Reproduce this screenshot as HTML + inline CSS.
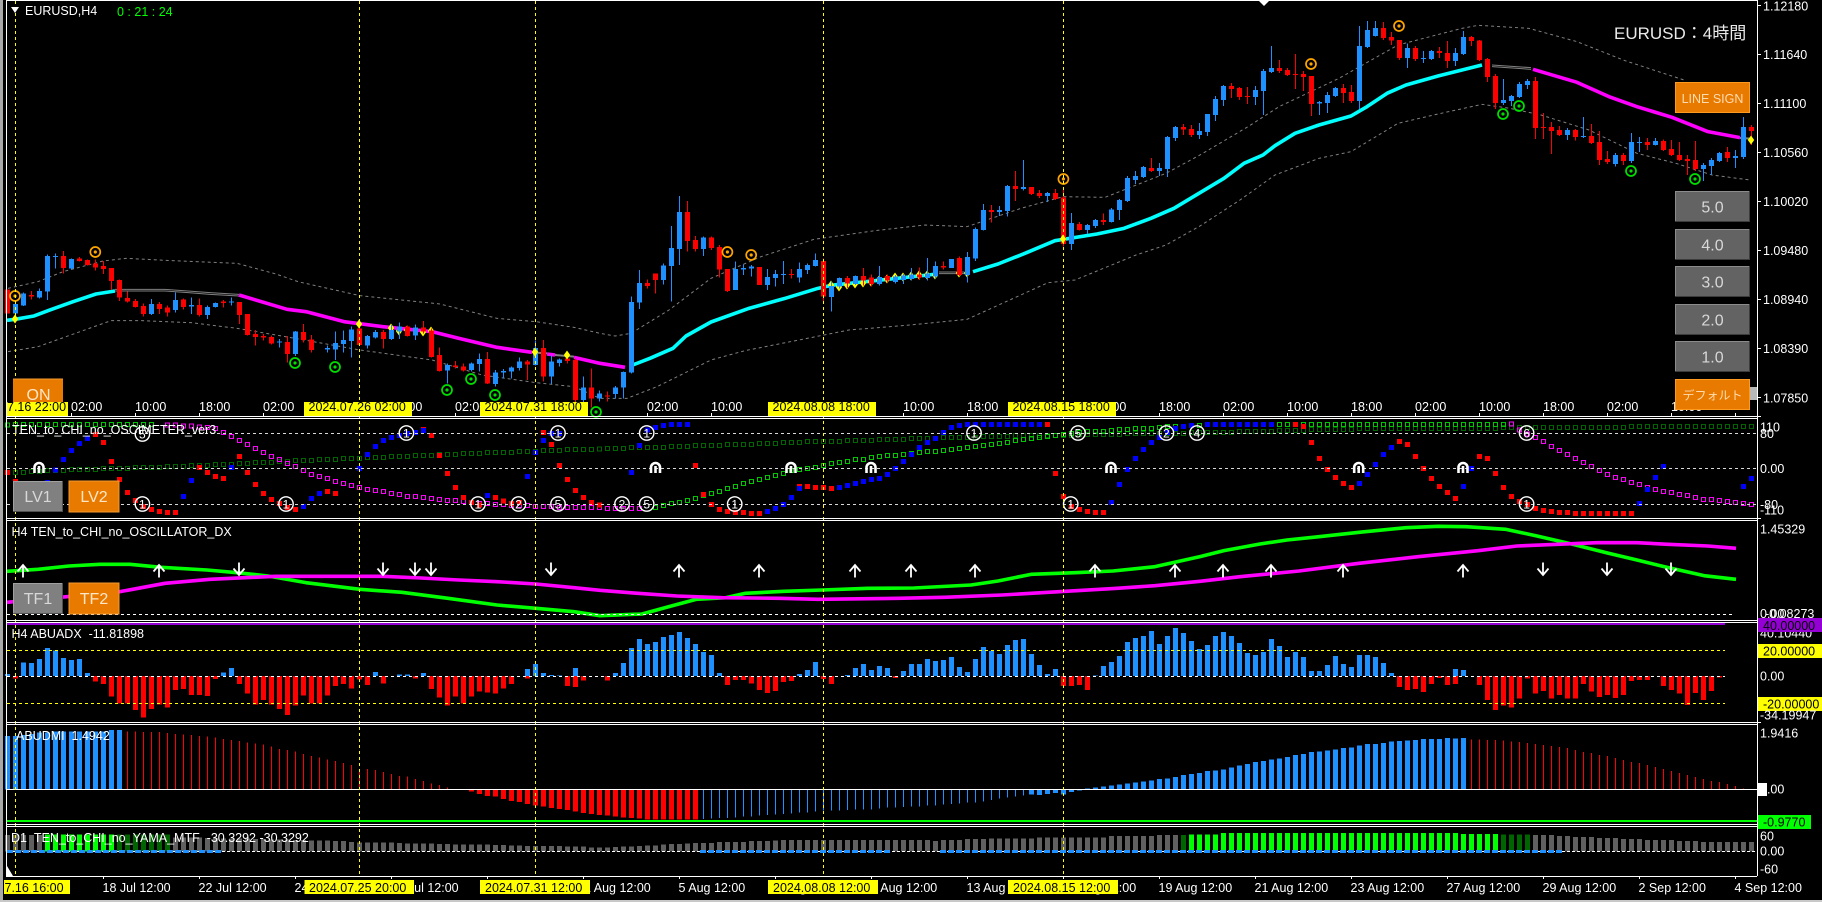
<!DOCTYPE html>
<html><head><meta charset="utf-8"><title>EURUSD,H4</title>
<style>
html,body{margin:0;padding:0;background:#000;width:1822px;height:902px;overflow:hidden}
svg{display:block}
text{font:12.5px "Liberation Sans","Noto Sans CJK JP",sans-serif;fill:#fff}
.k{fill:#000}
.b{font-size:16px;text-anchor:middle;fill:#d8d8d8}
.o{font-size:16px;text-anchor:middle;fill:#ffe6c8}
.s path,.s polyline{fill:none;vector-effect:non-scaling-stroke}
.c{shape-rendering:crispEdges}
.n{font-size:12px;text-anchor:middle}
</style></head><body>
<svg width="1822" height="902" viewBox="0 0 1822 902" xmlns="http://www.w3.org/2000/svg">
<defs>
<marker id="fr" markerUnits="userSpaceOnUse" markerWidth="5" markerHeight="15" refX="2.5" refY="7.5" overflow="visible"><rect width="5" height="15" fill="#f00" shape-rendering="crispEdges"/></marker>
<marker id="fb" markerUnits="userSpaceOnUse" markerWidth="5" markerHeight="15" refX="2.5" refY="7.5" overflow="visible"><rect width="5" height="15" fill="#00f" shape-rendering="crispEdges"/></marker>
<marker id="hm" markerUnits="userSpaceOnUse" markerWidth="5" markerHeight="15" refX="2.5" refY="7.5" overflow="visible"><path d="M0 0h5v15H0zM1 3v9h3V3z" fill-rule="evenodd" fill="#f0f" shape-rendering="crispEdges"/></marker>
<marker id="hg" markerUnits="userSpaceOnUse" markerWidth="5" markerHeight="15" refX="2.5" refY="7.5" overflow="visible"><path d="M0 0h5v15H0zM1 3v9h3V3z" fill-rule="evenodd" fill="#00c800" shape-rendering="crispEdges"/></marker>
<marker id="hd" markerUnits="userSpaceOnUse" markerWidth="5" markerHeight="15" refX="2.5" refY="7.5" overflow="visible"><path d="M0 0h5v15H0zM1 3v9h3V3z" fill-rule="evenodd" fill="#006400" shape-rendering="crispEdges"/></marker>
<g id="ro"><circle r="5" fill="none" stroke="#ffa500" stroke-width="1.7"/><circle r="1.6" fill="#ffa500"/></g>
<g id="rg"><circle r="5" fill="none" stroke="#00e000" stroke-width="1.7"/><circle r="1.6" fill="#00e000"/></g>
<path id="dm" d="M0-4.5L3.2 0 0 4.5-3.2 0z" fill="#ff0"/>
<path id="up" d="M0 6.5V-6M-5.5 .5L0-6 5.5 .5" fill="none" stroke="#fff" stroke-width="1.8"/>
<path id="dn" d="M0-6.5V6M-5.5-.5L0 6 5.5-.5" fill="none" stroke="#fff" stroke-width="1.8"/>
<path id="ar" d="M-4.5 5V-.5a4.5 4.5 0 0 1 9 0V5M0-2V5" fill="none" stroke="#fff" stroke-width="2.6"/>
<circle id="cr" r="7.2" fill="none" stroke="#fff" stroke-width="1.4"/>
</defs>
<rect width="1822" height="902" fill="#000"/>

<!-- main chart -->
<g class="s" transform="scale(1 .33333)">
<polyline stroke="#808080" stroke-dasharray="3 3" points="8,865 38,845 63,815 103,783 126,775 172,782 237,790 276,822 298,845 360,887 440,912 497,955 536,965 574,982 600,1000 615,1008 631,1000 669,930 711,835 761,770 814,718 875,692 925,675 967,680 1021,625 1063,590 1105,592 1166,520 1200,465 1248,380 1279,320 1339,235 1398,135 1462,85 1478,76 1529,85 1577,125 1625,182 1684,240"/>
<polyline stroke="#808080" stroke-dasharray="3 3" points="8,1055 38,1040 80,995 111,962 142,962 191,968 237,985 276,1005 360,1050 432,1080 482,1125 536,1148 574,1160 600,1195 627,1195 657,1160 711,1080 745,1052 799,1020 849,990 910,975 967,958 1048,848 1075,840 1136,765 1166,735 1200,678 1240,600 1275,525 1319,475 1351,455 1398,370 1438,342 1482,313 1510,325 1541,345 1589,390 1637,460 1676,490 1712,525 1750,540"/>
<polyline stroke="#0ff" stroke-width="3.6" stroke-linejoin="round" points="7,961 15,958 34,948 50,930 73,905 96,882 115,873"/>
<polyline stroke="#808080" points="115,868 165,868 188,873 210,878 239,883"/><polyline stroke="#808080" points="115,873 165,873 188,878 210,883 239,888"/>
<polyline stroke="#f0f" stroke-width="3.6" stroke-linejoin="round" points="239,885 287,928 306,935 344,965 383,980 432,995 459,1015 497,1042 532,1057"/>
<polyline stroke="#808080" stroke-width="2" points="532,1057 547,1060"/>
<polyline stroke="#f0f" stroke-width="3.6" points="547,1062 555,1065"/><polyline stroke="#808080" stroke-width="2" points="555,1065 574,1070"/>
<polyline stroke="#f0f" stroke-width="3.6" stroke-linejoin="round" points="574,1072 600,1090 625,1102"/>
<polyline stroke="#0ff" stroke-width="3.6" stroke-linejoin="round" points="631,1097 650,1075 673,1045 686,1008 711,966 749,925 784,896 818,865 831,856 937,822"/>
<polyline stroke="#808080" points="939,816 964,816"/><polyline stroke="#808080" points="939,821 964,821"/>
<polyline stroke="#0ff" stroke-width="3.6" stroke-linejoin="round" points="973,815 998,792 1025,760 1055,722 1097,702 1124,685 1151,655 1174,625 1200,578 1224,535 1244,490 1263,465 1275,437 1295,400 1319,375 1351,348 1367,320 1387,280 1406,255 1438,228 1482,195"/>
<polyline stroke="#808080" points="1492,195 1531,203"/><polyline stroke="#808080" points="1492,200 1531,208"/>
<polyline stroke="#f0f" stroke-width="3.6" stroke-linejoin="round" points="1533,208 1577,247 1609,290 1637,320 1672,352 1708,395 1740,413"/>
<polyline stroke="#808080" stroke-width="2" points="1740,414 1751,416"/>
</g>
<use href="#dm" x="391" y="328"/><use href="#dm" x="399" y="331"/><use href="#dm" x="407" y="330"/><use href="#dm" x="423" y="332"/><use href="#dm" x="431" y="331"/>
<use href="#dm" x="831" y="285"/><use href="#dm" x="839" y="287"/><use href="#dm" x="847" y="285"/><use href="#dm" x="855" y="284"/><use href="#dm" x="863" y="283"/><use href="#dm" x="871" y="282"/><use href="#dm" x="879" y="280"/><use href="#dm" x="887" y="279"/><use href="#dm" x="895" y="277"/><use href="#dm" x="903" y="277"/><use href="#dm" x="911" y="276"/><use href="#dm" x="919" y="275"/><use href="#dm" x="927" y="275"/><use href="#dm" x="935" y="275"/><use href="#dm" x="959" y="273"/><use href="#dm" x="967" y="273"/>
<g class="s c" transform="translate(.5 0) scale(1 .33333)">
<path stroke="#1e90ff" d="M15 905V960M23 877V918M39 865V895M47 763V900M55 760V806M71 775V808M151 897V945M175 877V937M191 893V942M207 917V957M215 907V923M231 892V917M279 1017V1042M295 993V1068M327 1036V1058M335 995V1080M343 992V1058M351 980V1073M367 1005V1046M375 990V1015M391 975V1020M399 968V1017M415 973V1020M447 1090V1150M471 1088V1115M479 1060V1115M495 1110V1160M503 1107V1135M511 1100V1135M519 1072V1112M535 1022V1097M551 1067V1152M559 1075V1100M583 1130V1210M599 1172V1205M615 1158V1195M623 1115V1195M631 890V1120M639 810V927M663 790V853M671 678V905M679 588V795M703 710V768M735 785V870M743 793V825M751 795V830M767 807V870M775 810V860M783 783V852M799 788V848M807 790V822M815 760V800M831 845V935M839 833V865M855 826V855M879 798V856M895 825V850M903 822V852M911 804V842M927 774V842M935 785V835M951 777V804M967 756V848M975 682V783M983 612V692M999 618V648M1007 555V650M1023 480V572M1047 576V606M1071 639V750M1087 672V702M1095 657V684M1111 624V668M1119 597V660M1127 528V606M1135 513V552M1143 498V534M1159 489V528M1167 408V531M1175 378V423M1199 369V417M1207 342V408M1215 288V363M1223 255V318M1255 258V315M1263 207V345M1271 138V219M1319 303V345M1327 276V339M1335 261V291M1359 78V327M1367 63V144M1375 63V110M1407 130V204M1423 153V189M1431 150V180M1455 144V198M1463 93V165M1503 237V315M1511 285V318M1519 246V294M1527 237V267M1567 384V420M1583 351V414M1615 459V500M1631 399V489M1639 411V456M1655 414V437M1703 489V543M1711 474V525M1719 456V486M1735 450V504M1743 351V477"/>
<path stroke="#1e90ff" stroke-width="5" d="M15 912V940M23 880V916M39 873V892M47 768V875M55 768V771M71 777V805M151 912V942M175 900V930M191 915V919M207 921V945M215 909V921M231 905V908M279 1025V1028M295 995V1062M327 1044V1049M335 1029V1048M343 1020V1032M351 988V1023M367 1008V1036M375 996V1012M391 990V1017M399 980V995M415 982V1007M447 1095V1112M471 1090V1110M479 1077V1092M495 1117V1152M503 1113V1118M511 1102V1115M519 1085V1104M535 1044V1095M551 1085V1130M559 1079V1089M583 1163V1200M599 1180V1195M615 1162V1182M623 1116V1163M631 906V1118M639 849V908M663 796V840M671 744V798M679 636V747M703 712V747M735 807V870M743 804V809M751 800V805M767 831V855M775 822V834M783 822V825M799 807V832M807 795V810M815 780V798M831 858V891M839 834V860M855 828V852M879 831V852M895 830V846M903 827V840M911 823V837M927 820V834M935 798V830M951 777V804M967 771V825M975 687V776M983 630V690M999 630V636M1007 558V633M1023 561V567M1047 579V588M1071 669V732M1087 675V690M1095 660V678M1111 628V666M1119 600V630M1127 534V603M1135 528V540M1143 501V531M1159 504V513M1167 411V507M1175 381V414M1199 393V405M1207 342V396M1215 297V345M1223 258V300M1255 270V291M1263 213V273M1271 204V216M1319 306V310M1327 285V309M1335 264V288M1359 138V303M1367 90V141M1375 84V108M1407 144V174M1423 174V177M1431 153V177M1455 159V183M1463 111V162M1503 300V309M1511 288V303M1519 252V291M1527 243V255M1567 390V405M1583 408V411M1615 465V492M1631 426V483M1639 426V429M1655 423V435M1703 495V507M1711 480V498M1719 459V483M1735 468V474M1743 381V471"/>
<path stroke="#f00" d="M7 868V940M31 873V898M63 753V820M79 771V785M87 778V797M95 778V812M103 783V822M111 804V870M119 838V903M127 875V908M135 897V923M143 910V950M159 906V942M167 917V950M183 895V928M199 895V950M223 900V923M239 906V972M247 942V1007M255 990V1037M263 1002V1022M271 1006V1033M287 1008V1088M303 972V1028M311 1005V1058M359 965V1037M383 990V1045M407 977V1010M423 963V1000M431 985V1072M439 1042V1115M455 1083V1105M463 1090V1115M487 1056V1152M527 1080V1140M543 1020V1145M567 1070V1090M575 1075V1208M591 1105V1222M607 1175V1205M647 838V866M655 820V880M687 603V755M695 708V755M711 710V750M719 735V833M727 807V876M759 801V855M791 807V835M823 775V910M847 828V864M863 804V857M871 824V860M887 824V848M919 802V840M943 785V808M959 770V828M991 615V668M1015 513V603M1031 561V585M1039 570V594M1055 567V600M1063 568V740M1079 666V692M1103 640V675M1151 474V516M1183 372V405M1191 375V411M1231 249V294M1239 261V300M1247 261V312M1279 180V219M1287 204V228M1295 162V267M1303 213V273M1311 228V348M1343 252V309M1351 255V309M1383 66V120M1391 96V135M1399 120V180M1415 138V183M1439 141V174M1447 123V204M1471 108V138M1479 120V183M1487 174V246M1495 222V327M1535 231V417M1543 339V417M1551 366V462M1559 378V408M1575 387V422M1591 372V432M1599 393V495M1607 453V492M1623 459V495M1647 414V450M1663 418V453M1671 420V468M1679 426V483M1687 465V525M1695 423V513M1727 441V486M1751 375V435"/>
<path stroke="#f00" stroke-width="5" d="M7 868V940M31 885V889M63 768V804M79 775V783M87 780V795M95 791V802M103 798V807M111 804V843M119 840V892M127 894V905M135 903V921M143 918V942M159 912V927M167 923V938M183 899V921M199 915V945M223 905V909M239 906V945M247 942V1005M255 1002V1011M263 1008V1013M271 1011V1030M287 1026V1062M303 996V1020M311 1018V1050M359 985V1035M383 996V1017M407 980V1008M423 982V995M431 992V1071M439 1065V1113M455 1096V1101M463 1100V1112M487 1077V1150M527 1085V1093M543 1044V1130M567 1076V1083M575 1080V1200M591 1163V1195M607 1187V1190M647 849V858M655 820V840M687 636V723M695 720V747M711 712V744M719 741V809M727 807V873M759 801V855M791 822V825M823 783V890M847 834V850M863 828V841M871 832V852M887 828V841M919 823V833M943 798V803M959 774V825M991 630V636M1015 558V567M1031 561V582M1039 579V588M1055 579V597M1063 593V732M1079 672V690M1103 660V666M1151 504V513M1183 381V389M1191 387V405M1231 258V267M1239 264V291M1247 288V291M1279 204V213M1287 210V225M1295 222V225M1303 222V231M1311 228V312M1343 264V279M1351 276V303M1383 84V114M1391 111V122M1399 120V174M1415 144V177M1439 153V159M1447 159V183M1471 111V123M1479 122V180M1487 177V231M1495 228V309M1535 243V384M1543 381V384M1551 381V393M1559 390V405M1575 390V411M1591 408V429M1599 426V480M1607 477V486M1623 465V483M1647 426V435M1663 423V450M1671 447V465M1679 465V480M1687 477V483M1695 480V507M1727 456V474M1751 381V393"/>
</g>
<use href="#ro" x="15" y="296"/><use href="#ro" x="95.3" y="252"/><use href="#ro" x="727.4" y="252"/><use href="#ro" x="751.2" y="255"/><use href="#ro" x="1063.4" y="179"/><use href="#ro" x="1311" y="64"/><use href="#ro" x="1399" y="26"/>
<use href="#rg" x="295" y="363"/><use href="#rg" x="335" y="367"/><use href="#rg" x="447" y="390"/><use href="#rg" x="471" y="379"/><use href="#rg" x="495" y="395"/><use href="#rg" x="596" y="412"/><use href="#rg" x="1503" y="114"/><use href="#rg" x="1519" y="106"/><use href="#rg" x="1631" y="171"/><use href="#rg" x="1695" y="179"/>
<use href="#dm" x="15" y="319"/><use href="#dm" x="359" y="324"/><use href="#dm" x="535" y="352"/><use href="#dm" x="567" y="355"/><use href="#dm" x="1751" y="140"/><use href="#dm" x="1063" y="239"/>

<!-- main time axis -->
<g fill="#fff" class="c"><path stroke="#fff" d="M71.5 413v3M135.5 413v3M199.5 413v3M263.5 413v3M327.5 413v3M391.5 413v3M455.5 413v3M519.5 413v3M647.5 413v3M711.5 413v3M903.5 413v3M967.5 413v3M1159.5 413v3M1223.5 413v3M1287.5 413v3M1351.5 413v3M1415.5 413v3M1479.5 413v3M1543.5 413v3M1607.5 413v3M1671.5 413v3M1735.5 413v3"/></g>
<text x="71" y="411">02:00</text><text x="135" y="411">10:00</text><text x="199" y="411">18:00</text><text x="263" y="411">02:00</text><text x="391" y="411">18:00</text><text x="455" y="411">02:00</text><text x="647" y="411">02:00</text><text x="711" y="411">10:00</text><text x="903" y="411">10:00</text><text x="967" y="411">18:00</text><text x="1095" y="411">10:00</text><text x="1159" y="411">18:00</text><text x="1223" y="411">02:00</text><text x="1287" y="411">10:00</text><text x="1351" y="411">18:00</text><text x="1415" y="411">02:00</text><text x="1479" y="411">10:00</text><text x="1543" y="411">18:00</text><text x="1607" y="411">02:00</text><text x="1671" y="411">10:00</text>

<!-- sub 1 -->
<g class="s" transform="translate(.5 410) scale(1 .33333)">
<polyline marker-start="url(#hd)" marker-mid="url(#hd)" marker-end="url(#hd)" points="7,188 15,187 23,187 31,184 39,184 47,181 55,181 63,181 71,178 79,178 87,178 95,178 103,175 111,175 119,175 127,175 135,172 143,172 151,172 159,172 167,169 175,169 183,169 191,166 199,166 207,166 215,163 223,163 231,163 239,160 247,160 255,157 263,157 271,157 279,154 287,154 295,151 303,151 311,151 319,148 327,148 335,148 343,145 351,145 359,145 367,142 375,142 383,142 391,139 399,139 407,139 415,136 423,136 431,136 439,133 447,133 455,133 463,130 471,130 479,130 487,127 495,127 503,127 511,127 519,124 527,124 535,124 543,121 551,121 559,121 567,118 575,118 583,118 591,118 599,117 607,115 615,115 623,115 631,112 639,112 647,112 655,112 663,112 671,109 679,109 687,109 695,106 703,106 711,106 719,106 727,103 735,103 743,103 751,103 759,100 767,100 775,100 783,97 791,97 799,97 807,94 815,94 823,94 831,94 839,94 847,91 855,91 863,91 871,91 879,88 887,88 895,88 903,88 911,85 919,85 927,85 935,85 943,82 951,82 959,82 967,82 975,82 983,79 991,79 999,79 1007,79 1015,76 1023,76 1031,76 1039,76 1047,76 1055,76 1063,76 1071,76 1079,73 1087,73 1095,73 1103,73 1111,73 1119,73 1127,70 1135,70 1143,70 1151,70 1159,70 1167,70 1175,70 1183,70 1191,67 1199,67 1207,67 1215,67 1223,67 1231,67 1239,64 1247,64 1255,64 1263,64 1271,64 1279,61 1287,61 1295,61 1303,61 1311,58 1319,58 1327,58 1335,58 1343,58 1351,58 1359,55 1367,55 1375,55 1383,55 1391,55 1399,55 1407,55 1415,55 1423,55 1431,55 1439,55 1447,55 1455,55 1463,55 1471,55 1479,55 1487,55 1495,55 1503,52 1511,52 1519,52 1527,52 1535,52 1543,52 1551,52 1559,52 1567,52 1575,52 1583,52 1591,52 1599,52 1607,52 1615,52 1623,52 1631,49 1639,49 1647,49 1655,49 1663,49 1671,49 1679,49 1687,49 1695,49 1703,49 1711,49 1719,49 1727,49 1735,49 1743,49 1751,49"/>
<polyline marker-start="url(#hg)" marker-mid="url(#hg)" marker-end="url(#hg)" points="7,45 15,44 23,44 31,44 39,44 47,44 55,44 63,44 71,44 79,44 87,44 95,44 103,44 111,44 119,44 127,44 135,44 143,44 151,44 655,292 663,286 671,280 679,277 687,271 695,265 703,256 711,250 719,244 727,235 735,229 743,220 751,214 759,208 767,202 775,196 783,190 791,181 799,178 807,175 815,172 823,166 831,160 839,157 847,154 855,148 863,148 871,142 879,139 887,136 895,136 903,133 911,130 919,127 927,124 935,124 943,121 951,118 959,115 967,112 975,109 983,106 991,103 999,100 1007,97 1015,91 1023,88 1031,85 1039,82 1047,79 1055,76 1063,73 1071,70 1079,67 1087,64 1095,64 1103,64 1111,61 1119,58 1127,58 1135,55 1143,55 1151,55 1159,52 1167,49 1175,49 1183,49 1191,46 1199,46 1207,44 1215,44 1223,44 1231,44 1239,44 1247,44 1255,44 1263,44 1271,44 1279,44 1287,44 1295,44 1303,44 1311,44 1319,44 1327,44 1335,44 1343,44 1351,44 1359,44 1367,44 1375,44 1383,44 1391,44 1399,44 1407,44 1415,44 1423,44 1431,44 1439,44 1447,44 1455,44 1463,44 1471,44 1479,44 1487,44 1495,44 1503,44"/>
<polyline marker-start="url(#hm)" marker-mid="url(#hm)" marker-end="url(#hm)" points="167,45 175,45 183,48 191,48 199,51 207,52 215,55 223,67 231,79 239,91 247,103 255,115 263,127 271,139 279,148 287,160 295,169 303,181 311,193 319,199 327,205 335,214 343,220 351,226 359,232 367,238 375,241 383,244 391,250 399,253 407,259 415,259 423,262 431,265 439,268 447,271 455,271 463,274 471,277 479,280 487,280 495,283 503,283 511,286 519,286 527,286 535,289 543,289 551,289 559,292 567,292 575,292 583,292 591,292 599,292 607,295 615,295 623,295 631,295 639,295 1511,42 1519,60 1527,72 1535,82 1543,94 1551,109 1559,121 1567,133 1575,145 1583,157 1591,169 1599,181 1607,193 1615,202 1623,208 1631,217 1639,223 1647,232 1655,238 1663,244 1671,247 1679,253 1687,256 1695,262 1703,268 1711,268 1719,271 1727,274 1735,277 1743,280 1751,283"/>
<polyline marker-start="url(#fr)" marker-mid="url(#fr)" marker-end="url(#fr)" points="7,188 15,214 23,232 31,244 95,73 103,97 111,154 119,208 127,247 135,271 143,289 151,298 159,304 167,307 175,307 199,172 207,187 215,199 223,205 239,139 247,187 255,223 263,250 271,268 279,280 287,292 295,298 327,244 335,250 423,58 431,76 439,136 447,190 455,232 463,262 471,277 479,285 495,262 503,273 511,280 519,277 543,67 551,103 559,166 567,208 575,241 583,262 591,277 599,285 687,43 695,166 703,253 711,283 719,298 727,304 735,307 743,307 751,310 759,310 799,229 807,229 815,232 823,232 831,235 1047,43 1055,190 1063,259 1071,290 1079,298 1087,304 1095,307 1103,307 1295,43 1303,50 1311,97 1319,145 1327,178 1335,202 1343,220 1351,232 1399,94 1407,103 1415,139 1423,175 1431,205 1439,229 1447,247 1455,265 1479,139 1487,145 1495,190 1503,232 1511,259 1519,274 1527,283 1535,295 1543,301 1551,304 1559,307 1567,307 1575,310 1583,310 1591,310 1599,310 1607,310 1615,310 1623,310 1631,310"/>
<polyline marker-start="url(#fb)" marker-mid="url(#fb)" marker-end="url(#fb)" points="39,244 47,217 55,180 63,148 71,121 79,100 87,86 183,259 191,211 231,172 303,289 311,265 319,250 359,175 367,133 375,109 383,91 391,82 399,76 407,70 415,67 423,62 487,256 527,199 535,127 543,91 551,70 559,70 631,187 639,106 647,60 655,52 663,46 671,43 679,43 687,43 767,304 775,295 783,283 791,262 799,235 839,232 847,226 855,220 863,214 871,208 879,205 887,193 895,175 903,154 911,133 919,112 927,97 935,85 943,67 951,52 959,46 967,43 975,43 983,43 991,43 999,43 1007,43 1015,43 1023,43 1031,43 1039,43 1111,277 1119,223 1127,178 1135,145 1143,118 1151,97 1159,82 1167,67 1175,55 1183,49 1191,46 1207,44 1215,44 1223,44 1231,44 1239,44 1247,44 1255,44 1263,44 1271,44 1359,220 1367,193 1375,163 1383,133 1391,112 1463,229 1471,175 1639,280 1647,238 1655,202 1663,169 1743,229 1751,205"/>
</g>
<g stroke="#d8d8d8" stroke-dasharray="3 3" class="c"><path d="M7 433.5H1757M7 468.5H1757M7 504.5H1757"/></g>
<use href="#cr" x="142.4" y="504"/><text class="n" x="142.4" y="508.5">1</text>
<use href="#cr" x="142.4" y="434"/><text class="n" x="142.4" y="438.5">5</text>
<use href="#cr" x="286" y="504"/><text class="n" x="286" y="508.5">1</text>
<use href="#cr" x="406.4" y="433"/><text class="n" x="406.4" y="437.5">1</text>
<use href="#cr" x="478" y="504"/><text class="n" x="478" y="508.5">1</text>
<use href="#cr" x="518.5" y="504"/><text class="n" x="518.5" y="508.5">2</text>
<use href="#cr" x="558" y="504"/><text class="n" x="558" y="508.5">5</text>
<use href="#cr" x="558" y="433"/><text class="n" x="558" y="437.5">1</text>
<use href="#cr" x="622" y="504"/><text class="n" x="622" y="508.5">2</text>
<use href="#cr" x="646.7" y="504"/><text class="n" x="646.7" y="508.5">5</text>
<use href="#cr" x="646.7" y="433"/><text class="n" x="646.7" y="437.5">1</text>
<use href="#cr" x="734.7" y="504"/><text class="n" x="734.7" y="508.5">1</text>
<use href="#cr" x="974" y="433"/><text class="n" x="974" y="437.5">1</text>
<use href="#cr" x="1070.7" y="504"/><text class="n" x="1070.7" y="508.5">1</text>
<use href="#cr" x="1078" y="433"/><text class="n" x="1078" y="437.5">5</text>
<use href="#cr" x="1166.4" y="433"/><text class="n" x="1166.4" y="437.5">2</text>
<use href="#cr" x="1197" y="433"/><text class="n" x="1197" y="437.5">4</text>
<use href="#cr" x="1526.6" y="433"/><text class="n" x="1526.6" y="437.5">6</text>
<use href="#cr" x="1526.6" y="504"/><text class="n" x="1526.6" y="508.5">1</text>
<use href="#ar" x="39" y="468"/><use href="#ar" x="655.5" y="468"/><use href="#ar" x="791" y="468"/><use href="#ar" x="871" y="468"/><use href="#ar" x="1111" y="468"/><use href="#ar" x="1358.7" y="468"/><use href="#ar" x="1463" y="468"/>
<text x="12" y="434">TEN_to_CHI_no_OSCIMETER_ver3</text>

<!-- sub 2 -->
<g class="s" transform="scale(1 .33333) translate(0 1230)">
<polyline stroke="#0f0" stroke-width="3.6" stroke-linejoin="round" points="7,484 38,478 69,468 100,463 130,463 161,472 207,480 237,488 268,498 306,518 360,538 402,547 448,565 497,585 536,595 574,605 600,617 642,612 669,590 696,568 726,563 745,550 784,544 822,540 868,535 914,534 971,525 998,513 1031,493 1075,488 1113,483 1155,470 1200,440 1224,422 1260,402 1287,390 1319,380 1359,367 1406,353 1438,349 1466,350 1506,358 1537,378 1569,400 1609,430 1637,450 1664,470 1704,497 1736,508"/>
<polyline stroke="#f0f" stroke-width="3.6" stroke-linejoin="round" points="7,577 120,545 165,520 210,508 253,502 276,499 383,499 421,504 459,510 497,515 536,522 574,533 600,541 638,550 677,558 722,563 780,565 818,568 898,565 944,562 1002,555 1059,545 1117,535 1155,527 1200,514 1240,500 1299,483 1359,460 1418,440 1478,422 1517,408 1597,398 1637,398 1668,403 1708,408 1736,415"/>
</g>
<path d="M7 614.5H1733" stroke="#fff" stroke-dasharray="3 3" class="c"/>
<use href="#up" x="23" y="571"/><use href="#up" x="159" y="571"/><use href="#dn" x="239" y="569"/><use href="#dn" x="383" y="569"/><use href="#dn" x="415" y="569"/><use href="#dn" x="431" y="569"/><use href="#dn" x="551" y="569"/><use href="#up" x="679" y="571"/><use href="#up" x="759" y="571"/><use href="#up" x="855" y="571"/><use href="#up" x="911" y="571"/><use href="#up" x="975" y="571"/><use href="#up" x="1095" y="571"/><use href="#up" x="1175" y="571"/><use href="#up" x="1223" y="571"/><use href="#up" x="1271" y="571"/><use href="#up" x="1343" y="571"/><use href="#up" x="1463" y="571"/><use href="#dn" x="1543" y="569"/><use href="#dn" x="1607" y="569"/><use href="#dn" x="1671" y="569"/>
<text x="11.5" y="536">H4 TEN_to_CHI_no_OSCILLATOR_DX</text>

<!-- sub 3 -->
<rect x="7" y="623" width="1718" height="2" fill="#9400d3"/>
<g class="s c" transform="translate(.5 410) scale(1 .33333)" stroke-width="5">
<path stroke="#1e90ff" d="M7 792V798M23 757V798M31 759V798M39 747V798M47 714V798M55 721V798M63 744V798M71 750V798M79 747V798M87 789V798M223 788V798M231 774V798M375 786V798M399 793V798M407 793V798M423 789V798M527 777V798M535 762V798M543 789V798M551 795V798M559 796V798M575 774V798M615 789V798M623 759V798M631 714V798M639 687V798M647 702V798M655 696V798M663 681V798M671 675V798M679 666V798M687 684V798M695 702V798M703 726V798M711 735V798M719 789V798M799 792V798M807 780V798M815 756V798M847 795V798M855 774V798M863 762V798M871 780V798M879 768V798M887 774V798M903 783V798M911 762V798M919 762V798M927 747V798M935 753V798M943 750V798M951 741V798M959 771V798M967 786V798M975 747V798M983 711V798M991 723V798M999 732V798M1007 705V798M1015 690V798M1023 687V798M1031 732V798M1039 765V798M1047 792V798M1055 777V798M1095 796V798M1103 768V798M1111 756V798M1119 738V798M1127 696V798M1135 684V798M1143 678V798M1151 663V798M1159 702V798M1167 678V798M1175 654V798M1183 669V798M1191 693V798M1199 717V798M1207 705V798M1215 678V798M1223 666V798M1231 678V798M1239 699V798M1247 729V798M1255 735V798M1263 726V798M1271 687V798M1279 708V798M1287 741V798M1295 726V798M1303 741V798M1311 783V798M1319 783V798M1327 765V798M1335 738V798M1343 762V798M1351 771V798M1359 735V798M1367 735V798M1375 741V798M1383 759V798M1391 789V798M1455 777V798M1463 780V798"/>
<path stroke="#f00" d="M15 798V806M95 798V815M103 798V822M111 798V860M119 798V880M127 798V880M135 798V900M143 798V923M151 798V897M159 798V884M167 798V893M175 798V840M183 798V837M191 798V855M199 798V855M207 798V858M215 798V807M239 798V822M247 798V850M255 798V884M263 798V870M271 798V884M279 798V897M287 798V915M295 798V887M303 798V857M311 798V880M319 798V880M327 798V857M335 798V828M343 798V822M351 798V835M359 798V808M367 798V825M383 798V820M415 798V806M431 798V837M439 798V862M447 798V887M455 798V860M463 798V880M471 798V860M479 798V845M487 798V848M495 798V850M503 798V836M511 798V822M527 798V806M567 798V828M575 798V831M583 798V812M607 798V812M727 798V825M735 798V810M743 798V810M751 798V820M759 798V840M767 798V849M775 798V843M783 798V816M791 798V813M823 798V807M831 798V822M895 798V804M1063 798V828M1071 798V828M1079 798V825M1087 798V840M1399 798V831M1407 798V840M1415 798V837M1423 798V846M1431 798V822M1439 798V804M1447 798V825M1455 798V822M1479 798V825M1487 798V870M1495 798V900M1503 798V887M1511 798V893M1519 798V865M1527 798V805M1535 798V850M1543 798V843M1551 798V865M1559 798V855M1567 798V865M1575 798V865M1583 798V822M1591 798V845M1599 798V861M1607 798V855M1615 798V864M1623 798V855M1631 798V813M1639 798V810M1647 798V810M1663 798V828M1671 798V840M1679 798V851M1687 798V885M1695 798V849M1703 798V870M1711 798V843M1719 798V803"/>
</g>
<path d="M7 650.5H1725M7 703.5H1725" stroke="#ff0" stroke-dasharray="3 3" class="c"/>
<path d="M7 676.5H1725" stroke="#fff" stroke-dasharray="3 3" class="c"/>
<text x="11.5" y="638">H4 ABUADX&#160;&#160;-11.81898</text>

<!-- sub 4 -->
<g class="s c" transform="translate(.5 690) scale(1 .33333)">
<path stroke="#1e90ff" stroke-width="5" d="M7 138V298M15 138V298M23 135V298M31 132V298M39 128V298M47 128V298M55 125V298M63 125V298M71 124V298M79 124V298M87 124V298M95 124V298M103 124V298M111 120V298M119 120V298M1063 298V313M1039 298V315M1047 298V312M1031 298V313M1055 298V309M1071 298V306M1079 298V302M1087 295V298M1095 292V298M1103 289V298M1111 286V298M1119 283V298M1127 280V298M1135 277V298M1143 274V298M1151 271V298M1159 267V298M1167 265V298M1175 261V298M1183 255V298M1191 252V298M1199 249V298M1207 243V298M1215 241V298M1223 238V298M1231 232V298M1239 226V298M1247 222V298M1255 216V298M1263 213V298M1271 208V298M1279 205V298M1287 201V298M1295 195V298M1303 192V298M1311 186V298M1319 184V298M1327 181V298M1335 178V298M1343 174V298M1351 172V298M1359 166V298M1367 162V298M1375 162V298M1383 159V298M1391 155V298M1399 153V298M1407 151V298M1415 150V298M1423 147V298M1431 147V298M1439 147V298M1447 144V298M1455 145V298M1463 144V298"/>
<path stroke="#f00" stroke-width="5" d="M471 298V305M479 298V312M487 298V318M495 298V320M503 298V327M511 298V333M519 298V336M527 298V342M535 298V346M543 298V349M551 298V354M559 298V357M567 298V360M575 298V364M583 298V369M591 298V372M599 298V375M607 298V377M615 298V379M623 298V382M631 298V384M639 298V386M647 298V388M655 298V389M663 298V389M671 298V389M679 298V389M687 298V389M695 298V389"/>
<path stroke="#f00" d="M127 124V298M135 125V298M143 126V298M151 126V298M159 126V298M167 129V298M175 132V298M183 133V298M191 135V298M199 138V298M207 140V298M215 142V298M223 147V298M231 150V298M239 153V298M247 158V298M255 161V298M263 164V298M271 170V298M279 177V298M287 180V298M295 185V298M303 192V298M311 198V298M319 202V298M327 208V298M335 213V298M343 219V298M351 225V298M359 238V298M367 237V298M375 240V298M383 246V298M391 252V298M399 258V298M407 260V298M415 267V298M423 273V298M431 280V298M439 285V298M447 292V298M1471 148V298M1479 148V298M1487 150V298M1495 150V298M1503 151V298M1511 154V298M1519 156V298M1527 159V298M1535 162V298M1543 165V298M1551 168V298M1559 171V298M1567 174V298M1575 180V298M1583 186V298M1591 189V298M1599 195V298M1607 198V298M1615 204V298M1623 210V298M1631 216V298M1639 219V298M1647 225V298M1655 231V298M1663 237V298M1671 243V298M1679 249V298M1687 255V298M1695 261V298M1703 267V298M1711 273V298M1719 276V298M1727 282V298M1735 288V298M1743 295V298"/>
<path stroke="#1e90ff" d="M703 298V387M711 298V385M719 298V384M727 298V384M735 298V382M743 298V380M751 298V379M759 298V377M767 298V375M775 298V373M783 298V372M791 298V370M799 298V368M807 298V367M815 298V365M823 298V362M831 298V362M839 298V361M847 298V360M855 298V358M863 298V358M871 298V358M879 298V356M887 298V353M895 298V352M903 298V351M911 298V350M919 298V349M927 298V347M935 298V346M943 298V344M951 298V342M959 298V340M967 298V338M975 298V337M983 298V334M991 298V330M999 298V326M1007 298V322M1015 298V320M1023 298V316"/>
</g>
<path d="M7 789.5H1757" stroke="#fff" class="c"/>
<rect x="7" y="820" width="1750" height="2" fill="#0f0"/>
<text x="16" y="740">ABUDMI&#160;&#160;1.4942</text>

<!-- sub 5 -->
<g class="s c" transform="translate(.5 690) scale(1 .33333)" stroke-width="5">
<path stroke="#606060" d="M7 435V484M15 435V484M23 435V484M31 435V484M39 435V484M175 442V484M183 442V484M191 443V484M199 443V484M207 444V484M215 444V484M223 445V484M231 445V484M239 446V484M247 446V484M255 447V484M263 447V484M271 448V484M279 448V484M287 449V484M295 450V484M303 450V484M311 451V484M319 451V484M327 452V484M335 453V484M343 453V484M351 456V484M359 457V484M367 457V484M375 457V484M383 457V484M391 458V484M399 459V484M407 460V484M415 460V484M423 461V484M431 461V484M439 462V484M447 462V484M455 463V484M463 463V484M471 463V484M479 463V484M487 464V484M495 465V484M503 465V484M511 466V484M519 466V484M527 468V484M535 468V484M543 468V484M551 468V484M559 468V484M567 469V484M575 470V484M583 470V484M591 472V484M599 473V484M607 472V484M615 471V484M623 470V484M631 470V484M639 468V484M647 466V484M655 466V484M663 464V484M671 462V484M679 462V484M687 461V484M695 459V484M703 459V484M711 459V484M719 456V484M727 456V484M735 456V484M743 456V484M751 453V484M759 453V484M767 453V484M775 452V484M783 450V484M791 450V484M799 450V484M807 450V484M815 450V484M823 450V484M831 450V484M839 450V484M847 450V484M855 450V484M863 450V484M871 450V484M879 450V484M887 450V484M895 450V484M903 450V484M911 450V484M919 450V484M927 450V484M935 453V484M943 450V484M951 450V484M959 450V484M967 447V484M975 447V484M983 447V484M991 445V484M999 445V484M1007 445V484M1015 445V484M1023 445V484M1031 445V484M1039 442V484M1047 442V484M1055 442V484M1063 442V484M1071 442V484M1079 442V484M1087 442V484M1095 442V484M1103 442V484M1111 438V484M1119 438V484M1127 438V484M1135 438V484M1143 438V484M1151 438V484M1159 435V484M1167 435V484M1175 435V484M1535 435V484M1543 435V484M1551 435V484M1559 438V484M1567 438V484M1575 441V484M1583 441V484M1591 441V484M1599 444V484M1607 444V484M1615 444V484M1623 447V484M1631 447V484M1639 447V484M1647 450V484M1655 450V484M1663 450V484M1671 450V484M1679 453V484M1687 453V484M1695 453V484M1703 456V484M1711 456V484M1719 456V484M1727 456V484M1735 456V484M1743 456V484M1751 456V484"/>
<path stroke="#006400" d="M119 433V484M127 433V484M135 433V484M143 433V484M151 433V484M159 433V484M167 433V484M1183 435V484M1503 433V484M1511 433V484M1519 433V484M1527 433V484"/>
<path stroke="#0f0" d="M47 433V484M55 433V484M63 433V484M71 433V484M79 433V484M87 433V484M95 433V484M103 433V484M111 433V484M1191 433V484M1199 433V484M1207 433V484M1215 433V484M1223 429V484M1231 429V484M1239 429V484M1247 429V484M1255 429V484M1263 429V484M1271 429V484M1279 429V484M1287 429V484M1295 429V484M1303 429V484M1311 429V484M1319 429V484M1327 429V484M1335 429V484M1343 429V484M1351 429V484M1359 429V484M1367 429V484M1375 429V484M1383 429V484M1391 429V484M1399 429V484M1407 429V484M1415 429V484M1423 429V484M1431 429V484M1439 429V484M1447 429V484M1455 429V484M1463 432V484M1471 432V484M1479 432V484M1487 432V484M1495 432V484"/>
</g>
<path d="M7 851.5H1757" stroke="#fff" stroke-dasharray="3 2" class="c"/>
<path d="M7 851.5H223M700 851.5H891M940 851.5H1563" stroke="#1e90ff" stroke-width="3" stroke-dasharray="6 2" class="c"/>
<text x="11" y="842">D1&#160;&#160;TEN_to_CHI_no_YAMA_MTF&#160;&#160;-30.3292 -30.3292</text>

<!-- vertical lines -->
<path d="M15.5 1V876M359.5 1V876M535.5 1V876M823.5 1V876M1063.5 1V876" stroke="#ff0" stroke-dasharray="3 3" class="c"/>

<!-- frames -->
<rect x="0" y="0" width="3" height="902" fill="#a8a8a8"/>
<rect x="0" y="900" width="1822" height="2" fill="#c8c8c8"/>
<path class="c" stroke="#fff" fill="none" d="M6 .5H1757M6.5 0V876M1757.5 0V876M6 416.5H1757M6 418.5H1757M6 518.5H1757M6 520.5H1757M6 620.5H1757M6 622.5H1757M6 722.5H1757M6 724.5H1757M6 824.5H1757M6 826.5H1757M6 876.5H1757"/>
<path d="M7 866l6 10H7z" fill="#fff"/>
<path d="M1258 0h12l-6 6z" fill="#fff"/>
<path d="M11 7h8l-4 6z" fill="#fff"/>
<text x="25" y="15">EURUSD,H4</text>
<text x="117" y="16" style="fill:#0f0;font-size:12.5px">0 : 21 : 24</text>

<!-- yellow main labels -->
<g class="c" fill="#ff0"><rect x="7" y="402" width="61" height="14"/><rect x="304" y="402" width="108" height="14"/><rect x="480" y="402" width="108" height="14"/><rect x="768" y="402" width="108" height="14"/><rect x="1008" y="402" width="108" height="14"/></g>
<text class="k" x="7" y="411">7.16 22:00</text><text class="k" x="308.5" y="411">2024.07.26 02:00</text><text class="k" x="484.5" y="411">2024.07.31 18:00</text><text class="k" x="772.5" y="411">2024.08.08 18:00</text><text class="k" x="1012.5" y="411">2024.08.15 18:00</text>

<!-- buttons -->
<rect x="13" y="379" width="50" height="23" fill="#e87a00"/><path d="M13 379h50" stroke="#f59a30"/><text class="o" x="38.5" y="400">ON</text>
<g class="c">
<rect x="13" y="481" width="50" height="31" fill="#808080"/><path d="M13 481.5h50M13.5 481v31" stroke="#a0a0a0"/><path d="M13 511.5h50M62.5 481v31" stroke="#505050"/>
<rect x="13" y="583" width="50" height="31" fill="#808080"/><path d="M13 583.5h50M13.5 583v31" stroke="#a0a0a0"/><path d="M13 613.5h50M62.5 583v31" stroke="#505050"/>
<rect x="69" y="481" width="50" height="31" fill="#e87a00" stroke="#f59a30"/>
<rect x="69" y="583" width="50" height="31" fill="#e87a00" stroke="#f59a30"/>
</g>
<text class="b" x="38" y="502">LV1</text><text class="o" x="94" y="502">LV2</text><text class="b" x="38" y="604">TF1</text><text class="o" x="94" y="604">TF2</text>

<g class="c">
<rect x="1750" y="387" width="7" height="13" fill="#b8b8b8"/>
<rect x="1675.5" y="82.5" width="74" height="30" fill="#e87a00" stroke="#ff9a20"/>
<rect x="1675.5" y="379.5" width="74" height="30" fill="#e87a00" stroke="#ff9a20"/>
<rect x="1675" y="191" width="75" height="31" fill="#636363"/><path d="M1675 191.5h75M1675.5 191v31" stroke="#8c8c8c"/><path d="M1675 221.5h75M1749.5 191v31" stroke="#3c3c3c"/>
<rect x="1675" y="229" width="75" height="31" fill="#636363"/><path d="M1675 229.5h75M1675.5 229v31" stroke="#8c8c8c"/><path d="M1675 259.5h75M1749.5 229v31" stroke="#3c3c3c"/>
<rect x="1675" y="266" width="75" height="31" fill="#636363"/><path d="M1675 266.5h75M1675.5 266v31" stroke="#8c8c8c"/><path d="M1675 296.5h75M1749.5 266v31" stroke="#3c3c3c"/>
<rect x="1675" y="304" width="75" height="31" fill="#636363"/><path d="M1675 304.5h75M1675.5 304v31" stroke="#8c8c8c"/><path d="M1675 334.5h75M1749.5 304v31" stroke="#3c3c3c"/>
<rect x="1675" y="341" width="75" height="31" fill="#636363"/><path d="M1675 341.5h75M1675.5 341v31" stroke="#8c8c8c"/><path d="M1675 371.5h75M1749.5 341v31" stroke="#3c3c3c"/>
</g>
<text x="1712.5" y="103" style="text-anchor:middle;fill:#ffdcb0">LINE SIGN</text>
<text class="b" x="1712.5" y="212.5">5.0</text><text class="b" x="1712.5" y="250.5">4.0</text><text class="b" x="1712.5" y="287.5">3.0</text><text class="b" x="1712.5" y="325.5">2.0</text><text class="b" x="1712.5" y="362.5">1.0</text>
<text x="1712.5" y="399.5" style="text-anchor:middle;fill:#ffdcb0;font-size:12px">デフォルト</text>
<text x="1614" y="39" style="font-size:17px;fill:#eaeaea">EURUSD：4時間</text>

<!-- right axis -->
<path class="c" stroke="#fff" d="M1758 5.5h3M1758 54.5h3M1758 103.5h3M1758 152.5h3M1758 201.5h3M1758 250.5h3M1758 299.5h3M1758 348.5h3M1758 397.5h3M1758 416.5h3M1758 518.5h3M1758 620.5h3M1758 722.5h3M1758 824.5h3"/>
<text x="1763" y="10.5">1.12180</text><text x="1763" y="59">1.11640</text><text x="1763" y="108">1.11100</text><text x="1763" y="157">1.10560</text><text x="1763" y="206">1.10020</text><text x="1763" y="255">1.09480</text><text x="1763" y="304">1.08940</text><text x="1763" y="353">1.08390</text><text x="1763" y="402.5">1.07850</text>
<text x="1760" y="431.5">110</text><text x="1760" y="438">80</text><text x="1760" y="473">0.00</text><text x="1760" y="509">-80</text><text x="1760" y="514.5">-110</text>
<text x="1760" y="533.5">1.45329</text><text x="1760" y="618">0.00</text><text x="1765" y="618">-0.08273</text>
<text x="1760" y="637.5">40.10440</text>
<g class="c"><rect x="1758" y="618" width="64" height="14" fill="#9400d3"/><rect x="1758" y="644" width="64" height="14" fill="#ff0"/><rect x="1758" y="697" width="64" height="14" fill="#ff0"/><rect x="1758" y="783" width="9" height="13" fill="#fff"/></g>
<text class="k" x="1763" y="630">40.00000</text><text class="k" x="1763" y="655.5">20.00000</text><text x="1760" y="680.5">0.00</text><text x="1760" y="719.5">-34.19947</text><text class="k" x="1763" y="708.5">-20.00000</text>
<text x="1760" y="737.5">1.9416</text><text x="1760" y="793.5">0.00</text>
<rect x="1758" y="815" width="53" height="14" fill="#0f0" class="c"/><text class="k" x="1763" y="826.5">-0.9770</text>
<text x="1760" y="840.5">60</text><text x="1760" y="855.5">0.00</text><text x="1760" y="873.5">-60</text>

<!-- bottom axis -->
<path class="c" stroke="#fff" d="M103.5 876v3M199.5 876v3M295.5 876v3M391.5 876v3M487.5 876v3M583.5 876v3M679.5 876v3M775.5 876v3M871.5 876v3M967.5 876v3M1063.5 876v3M1159.5 876v3M1255.5 876v3M1351.5 876v3M1447.5 876v3M1543.5 876v3M1639.5 876v3M1735.5 876v3"/>
<text x="102.5" y="892">18 Jul 12:00</text><text x="198.5" y="892">22 Jul 12:00</text><text x="294.5" y="892">24 Jul 12:00</text><text x="390.5" y="892">26 Jul 12:00</text><text x="486.5" y="892">30 Jul 12:00</text><text x="584" y="892">1 Aug 12:00</text><text x="678.5" y="892">5 Aug 12:00</text><text x="774.5" y="892">7 Aug 12:00</text><text x="870.5" y="892">9 Aug 12:00</text><text x="966.5" y="892">13 Aug 12:00</text><text x="1062.5" y="892">15 Aug 12:00</text><text x="1158.5" y="892">19 Aug 12:00</text><text x="1254.5" y="892">21 Aug 12:00</text><text x="1350.5" y="892">23 Aug 12:00</text><text x="1446.5" y="892">27 Aug 12:00</text><text x="1542.5" y="892">29 Aug 12:00</text><text x="1638.5" y="892">2 Sep 12:00</text><text x="1734.5" y="892">4 Sep 12:00</text>
<g class="c" fill="#ff0"><rect x="4" y="880" width="66" height="14"/><rect x="304.5" y="880" width="109.5" height="14"/><rect x="480" y="880" width="110" height="14"/><rect x="768" y="880" width="110" height="14"/><rect x="1008" y="880" width="110" height="14"/></g>
<text class="k" x="4.5" y="892">7.16 16:00</text><text class="k" x="309" y="892">2024.07.25 20:00</text><text class="k" x="485" y="892">2024.07.31 12:00</text><text class="k" x="773" y="892">2024.08.08 12:00</text><text class="k" x="1013" y="892">2024.08.15 12:00</text>
</svg>
</body></html>
